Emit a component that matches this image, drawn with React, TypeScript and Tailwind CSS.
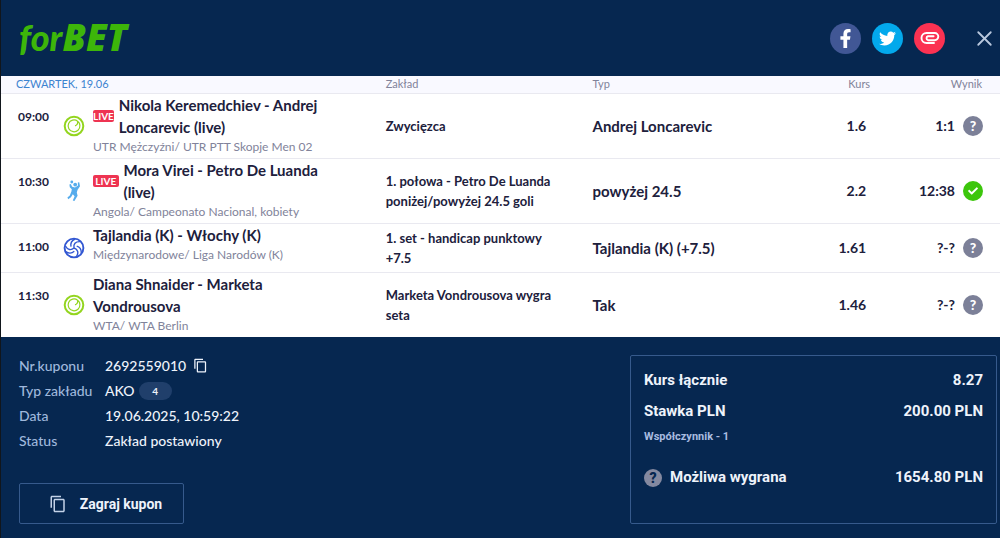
import type { ReactNode } from "react";
import { FaCheck, FaFacebookF, FaTwitter } from "react-icons/fa";
import { MdContentCopy } from "react-icons/md";
import { X } from "lucide-react";

type Bet = {
  time: string;
  sport: "tennis" | "handball" | "volleyball";
  live?: boolean;
  title: string;
  league: string;
  market: string;
  pick: string;
  odds: string;
  score: string;
  won?: boolean;
};

const bets: Bet[] = [
  {
    time: "09:00",
    sport: "tennis",
    live: true,
    title: "Nikola Keremedchiev - Andrej Loncarevic (live)",
    league: "UTR Mężczyźni/ UTR PTT Skopje Men 02",
    market: "Zwycięzca",
    pick: "Andrej Loncarevic",
    odds: "1.6",
    score: "1:1",
  },
  {
    time: "10:30",
    sport: "handball",
    live: true,
    title: "Mora Virei - Petro De Luanda (live)",
    league: "Angola/ Campeonato Nacional, kobiety",
    market: "1. połowa - Petro De Luanda poniżej/powyżej 24.5 goli",
    pick: "powyżej 24.5",
    odds: "2.2",
    score: "12:38",
    won: true,
  },
  {
    time: "11:00",
    sport: "volleyball",
    title: "Tajlandia (K) - Włochy (K)",
    league: "Międzynarodowe/ Liga Narodów (K)",
    market: "1. set - handicap punktowy +7.5",
    pick: "Tajlandia (K) (+7.5)",
    odds: "1.61",
    score: "?-?",
  },
  {
    time: "11:30",
    sport: "tennis",
    title: "Diana Shnaider - Marketa Vondrousova",
    league: "WTA/ WTA Berlin",
    market: "Marketa Vondrousova wygra seta",
    pick: "Tak",
    odds: "1.46",
    score: "?-?",
  },
];

export default function App() {
  return (
    <div className="min-h-screen border-l border-[#11161c] bg-[#062750] font-[Lato,sans-serif]">
      <Header />
      <BetTable />
      <Footer />
    </div>
  );
}

function Header() {
  return (
    <header className="flex h-19 items-center justify-between pr-[3px] pl-[18px]">
      <a
        href="#"
        className="flex items-baseline pb-[2px] leading-none font-black text-[#3db60a] italic"
      >
        <span className="text-[36px]">for</span>
        <span className="font-['Open_Sans',sans-serif] text-[37px] leading-8 font-extrabold">
          BET
        </span>
      </a>
      <div className="flex items-center">
        <div className="flex gap-[11px]">
          <Social label="Facebook" className="bg-[#415795]">
            <FaFacebookF size={19} />
          </Social>
          <Social label="Twitter" className="bg-[#03a9ec]">
            <FaTwitter size={17} />
          </Social>
          <Social label="Kopiuj link" className="bg-[#fb3252]">
            <svg
              width="20"
              height="20"
              viewBox="0 0 20 20"
              fill="none"
              stroke="currentColor"
              strokeWidth="1.9"
              strokeLinecap="round"
            >
              <path d="M14 15H6.5A5 5 0 0 1 6.5 5H14.7A3.6 3.6 0 0 1 14.7 12.2H8A2.1 2.1 0 0 1 8 8.2H13.6" />
            </svg>
          </Social>
        </div>
        <button aria-label="Zamknij" className="ml-[27px] text-[#b9c8de]">
          <X size={25} strokeWidth={1.75} />
        </button>
      </div>
    </header>
  );
}

function Social({
  label,
  className,
  children,
}: {
  label: string;
  className: string;
  children: ReactNode;
}) {
  return (
    <a
      href="#"
      aria-label={label}
      className={`flex size-[31px] items-center justify-center rounded-full text-white ${className}`}
    >
      {children}
    </a>
  );
}

function BetTable() {
  return (
    <table className="w-full table-fixed bg-white text-left text-[#20203c]">
      <colgroup>
        <col className="w-[62px]" />
        <col className="w-[30px]" />
        <col className="w-[29%]" />
        <col className="w-[21%]" />
        <col />
        <col className="w-[10%]" />
        <col className="w-[12%]" />
      </colgroup>
      <thead className="border-b border-[#e9e9f0] bg-[#f9f9ff] text-[11px] leading-4 text-[#81839a]">
        <tr>
          <th colSpan={3} className="pb-px pl-[15px] font-normal text-[#3c83d0]">
            CZWARTEK, 19.06
          </th>
          <th className="pb-px pl-[3px] font-normal">Zakład</th>
          <th className="pb-px font-normal">Typ</th>
          <th className="pr-[10px] pb-px text-right font-normal">Kurs</th>
          <th className="pr-[18px] pb-px text-right font-normal">Wynik</th>
        </tr>
      </thead>
      <tbody>
        {bets.map((bet) => (
          <BetRow key={bet.time} bet={bet} />
        ))}
      </tbody>
    </table>
  );
}

function BetRow({ bet }: { bet: Bet }) {
  return (
    <tr className="border-b border-[#e9e9f0] last:border-0">
      <td className="pt-[13px] pl-[17px] align-top text-xs leading-5 font-bold">
        {bet.time}
      </td>
      <td>
        <SportIcon sport={bet.sport} />
      </td>
      <td className="pb-[2px] align-top">
        <div className="flex max-w-[232px] items-center gap-[5px]">
          {bet.live && (
            <span className="w-[29px] rounded-xs bg-[#ee3452] text-center text-[10px] leading-3 font-bold text-white">
              LIVE
            </span>
          )}
          <span className="text-[15px] leading-[22px] font-bold">
            {bet.title}
          </span>
        </div>
        <div className="text-xs leading-[18px] text-[#81839a]">
          {bet.league}
        </div>
      </td>
      <td className="py-1 pr-6 pl-[3px] text-[13px] leading-5 font-bold">
        {bet.market}
      </td>
      <td className="text-[15px] font-bold">{bet.pick}</td>
      <td className="pr-[14px] text-right text-sm font-bold">{bet.odds}</td>
      <td className="pr-[17px]">
        <div className="flex items-center justify-end gap-2 text-sm font-bold">
          {bet.score}
          {bet.won ? (
            <span className="flex size-5 items-center justify-center rounded-full bg-[#3cc60c] text-white">
              <FaCheck size={10} />
            </span>
          ) : (
            <Help className="size-5 bg-[#7c8098] text-white" />
          )}
        </div>
      </td>
    </tr>
  );
}

function Help({ className }: { className: string }) {
  return (
    <button
      className={`flex items-center justify-center rounded-full text-sm leading-none font-black ${className}`}
    >
      ?
    </button>
  );
}

function SportIcon({ sport }: { sport: Bet["sport"] }) {
  if (sport === "volleyball") {
    return (
      <svg width="22" height="22" viewBox="0 0 22 22" fill="none" stroke="#3257d2">
        <circle cx="11" cy="11" r="9.4" strokeWidth="1.9" />
        {[0, 120, 240].map((angle) => (
          <path
            key={angle}
            transform={`rotate(${angle} 11 11)`}
            d="M11 11C10.2 7.2 12.4 4.4 17 4.6M8 9.6C7.2 6 8.8 3.6 12 2"
            strokeWidth="1.4"
          />
        ))}
      </svg>
    );
  }
  if (sport === "handball") {
    return (
      <svg width="22" height="22" viewBox="0 0 22 22" fill="#56acec">
        <circle cx="12.2" cy="4.6" r="1.9" />
        <circle cx="8.8" cy="2" r="1.4" />
        <path d="M6.4 4.4 7.8 4 9.2 6.8 12 7.4 15 5.6 14.8 2.4 16.2 2.2 17 6.2 14.6 9.8 13.8 12.6 14.6 15.8 11.4 21 9.8 20.4 11.6 16.2 9.8 14.2 8 17.2 5.2 19.2 4.4 17.6 6.8 15.6 8.4 11.6 8.8 9.2 6.8 7.2Z" />
      </svg>
    );
  }
  return (
    <svg width="22" height="22" viewBox="0 0 22 22" fill="none" stroke="#93d51f">
      <circle cx="11" cy="11" r="9.3" strokeWidth="2" />
      <path
        d="M14.6 6.2A5.9 5.9 0 1 0 16.9 10.4C16.8 8.6 16 7.2 14.6 6.2ZM14.6 6.2C15 8.6 14.2 10.2 12 10.8"
        strokeWidth="1.2"
        strokeLinejoin="round"
      />
    </svg>
  );
}

function Footer() {
  return (
    <footer className="flex items-stretch justify-between pt-[18px] pr-[3px] pb-3 pl-[18px] text-[#eef3fb]">
      <div className="flex flex-col items-start justify-between">
        <dl className="-mt-0.5 grid grid-cols-[86px_auto] text-sm leading-[25px] font-medium">
          <dt className="text-[#9fb8dc]">Nr.kuponu</dt>
          <dd className="flex items-center gap-[7px]">
            2692559010
            <button aria-label="Kopiuj numer kuponu">
              <MdContentCopy size={15} />
            </button>
          </dd>
          <dt className="whitespace-nowrap text-[#9fb8dc]">Typ zakładu</dt>
          <dd className="flex items-center gap-1">
            AKO
            <span className="w-[33px] rounded-full bg-[#203f6b] text-center text-[10px] leading-[18px] font-bold">
              4
            </span>
          </dd>
          <dt className="text-[#9fb8dc]">Data</dt>
          <dd>19.06.2025, 10:59:22</dd>
          <dt className="text-[#9fb8dc]">Status</dt>
          <dd>Zakład postawiony</dd>
        </dl>
        <button className="flex h-[41px] w-[165px] items-center justify-center gap-[13px] rounded-xs border border-[#365a8c] pl-2 font-[Roboto,sans-serif] text-sm font-bold">
          <MdContentCopy size={18} className="text-[#c3d2e8]" />
          Zagraj kupon
        </button>
      </div>

      <div className="w-[367px] rounded-xs border border-[#365a8c] px-[13px] pt-[9px] pb-[30px] font-[Roboto,sans-serif] text-[15px] leading-[31px] font-bold">
        <Total label="Kurs łącznie" value="8.27" />
        <Total label="Stawka PLN" value="200.00 PLN" />
        <p className="text-[11px] leading-5 text-[#a9bce0]">
          Współczynnik - 1
        </p>
        <div className="mt-[15px] flex justify-between">
          <span className="flex items-center gap-2">
            <Help className="size-[18px] bg-[#8489a0] text-[#062750]" />
            Możliwa wygrana
          </span>
          <span>1654.80 PLN</span>
        </div>
      </div>
    </footer>
  );
}

function Total({ label, value }: { label: string; value: string }) {
  return (
    <div className="flex justify-between">
      <span>{label}</span>
      <span>{value}</span>
    </div>
  );
}
